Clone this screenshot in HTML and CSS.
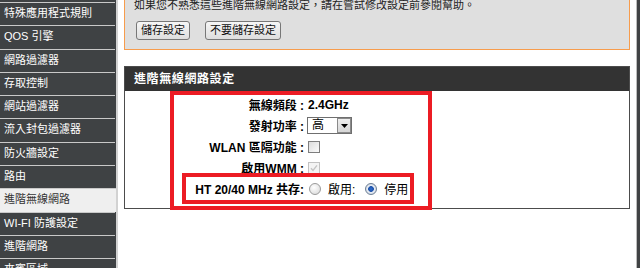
FILE: index.html
```html
<!DOCTYPE html>
<html lang="zh-Hant">
<head>
  <meta charset="UTF-8" />
  <title>進階無線網路</title>
  <link rel="stylesheet" href="styles.css">
</head>
<body>
  <div class="page">
    <nav class="sidebar">
      <a href="#">特殊應用程式規則</a>
      <a href="#">QOS 引擎</a>
      <a href="#">網路過濾器</a>
      <a href="#">存取控制</a>
      <a href="#">網站過濾器</a>
      <a href="#">流入封包過濾器</a>
      <a href="#">防火牆設定</a>
      <a href="#">路由</a>
      <a href="#" class="active">進階無線網路</a>
      <a href="#">WI-FI 防護設定</a>
      <a href="#">進階網路</a>
      <a href="#">來賓區域</a>
    </nav>

    <main class="main">
      <div class="notice-box">
        <p>如果您不熟悉這些進階無線網路設定，請在嘗試修改設定前參閱幫助。</p>
        <div class="actions">
          <button type="button">儲存設定</button>
          <button type="button">不要儲存設定</button>
        </div>
      </div>

      <section class="panel">
        <h2>進階無線網路設定</h2>
        <div class="panel-body">
          <div class="form-grid">
            <span class="label">無線頻段 :</span>
            <span class="value strong">2.4GHz</span>

            <span class="label">發射功率 :</span>
            <span class="value">
              <span class="select">
                <span class="select-text">高</span>
                <span class="select-btn">
                  <svg width="7" height="4" viewBox="0 0 7 4"><path d="M0 0H7L3.5 4Z" fill="#000"/></svg>
                </span>
              </span>
            </span>

            <span class="label">WLAN 區隔功能 :</span>
            <span class="value"><span class="check"></span></span>

            <span class="label">啟用WMM :</span>
            <span class="value">
              <span class="check disabled">
                <svg width="10" height="10" viewBox="0 0 10 10"><path d="M2 5.2L4 7.4L8 2.4" fill="none" stroke="#c4c4c4" stroke-width="1.4"/></svg>
              </span>
            </span>

            <span class="label">HT 20/40 MHz 共存:</span>
            <span class="value radios">
              <span class="radio"></span><span class="radio-text">啟用:</span>
              <span class="radio on"></span><span class="radio-text">停用</span>
            </span>
          </div>

          <div class="mark mark-outer"></div>
          <div class="mark mark-inner"></div>
        </div>
      </section>
    </main>

    <div class="edge"></div>
  </div>
</body>
</html>
```

FILE: styles.css
```css
* {
  margin: 0; padding: 0; box-sizing: border-box;
}
html, body {
  width: 640px;
  height: 268px;
  overflow: hidden;
  background: #fff;
}
body {
  font-family: "Liberation Sans", "Noto Sans CJK TC", sans-serif;
  font-size: 12px;
  color: #000;
}
.page {
  display: flex;
  height: 268px;
}

/* left menu */
.sidebar {
  width: 118px;
  flex-shrink: 0;
  background: #3f4244;
  border-right: 2px solid #d2d2d2;
  padding-top: 2px;
  display: flex;
  flex-direction: column;
}
.sidebar a {
  display: block;
  height: 23.3px;
  flex-shrink: 0;
  margin-right: 1px;
  border-top: 1px solid #c9c9c9;
  padding-left: 4px;
  color: #fff;
  text-decoration: none;
  font-size: 11px;
  line-height: 21px;
  white-space: nowrap;
}
.sidebar a.active {
  background: #efefef;
  color: #333;
  margin-right: 0;
}

/* main column */
.main {
  flex: 1;
  padding: 0 6px;
  margin-top: -12px;
}
.notice-box {
  background: #dfdfdf;
  border: 1px solid #f79c4c;
  padding: 8px 9px 9px;
}
.notice-box p {
  font-size: 11px;
  line-height: 16px;
  color: #222;
  white-space: nowrap;
}
.actions {
  display: flex;
  gap: 15px;
  margin-top: 8px;
  margin-left: 2px;
}
.actions button {
  height: 19px;
  padding: 0 4px;
  font-family: inherit;
  font-size: 11px;
  line-height: 17px;
  color: #111;
  background: linear-gradient(#f6f6f6, #dedede);
  border: 1px solid #777;
  border-radius: 3px;
}

.panel {
  margin-top: 16px;
  border: 1px solid #4c4c4c;
}
.panel h2 {
  height: 24px;
  background: #333;
  color: #fff;
  font-size: 12px;
  letter-spacing: 0.6px;
  line-height: 24px;
  padding-left: 9px;
}
.panel-body {
  position: relative;
  padding: 3px 0 9px;
  background: #fff;
}
.form-grid {
  display: grid;
  grid-template-columns: 179px 1fr;
  grid-auto-rows: 21px;
  column-gap: 4px;
  align-items: center;
}
.label {
  text-align: right;
  font-weight: bold;
  white-space: nowrap;
}
.value {
  display: flex;
  align-items: center;
}
.strong {
  font-weight: bold;
}

/* fake controls */
.select {
  display: flex;
  width: 45px;
  height: 17px;
  border: 1px solid #6f6f6f;
  background: #fff;
  margin-left: -1px;
}
.select-text {
  flex: 1;
  padding-left: 4px;
  line-height: 15px;
}
.select-btn {
  width: 14px;
  height: 15px;
  border: 1px solid #8a8a8a;
  background: linear-gradient(#efefef, #d6d6d6);
  display: flex;
  align-items: center;
  justify-content: center;
}
.check {
  width: 12px;
  height: 12px;
  border: 1px solid #7e7e7e;
  background: linear-gradient(135deg, #dcdcdc, #fbfbfb);
  display: flex;
  align-items: center;
  justify-content: center;
}
.check.disabled {
  border-color: #c2c2c2;
  background: #f4f4f4;
}
.radios {
  gap: 0;
}
.radio {
  width: 12px;
  height: 12px;
  border-radius: 50%;
  border: 1px solid #9a9a9a;
  background: radial-gradient(circle at 40% 35%, #fff, #d6d6d6);
  margin-left: 1px;
}
.radio.on {
  border-color: #6d7f95;
  background: radial-gradient(circle, #2f6fd0 0, #1b4fa8 2.5px, #e9eef6 3.2px, #c9d0da 6px);
  margin-left: 10px;
}
.radio-text {
  margin-left: 7px;
}

/* red annotation frames drawn over the form */
.mark {
  position: absolute;
  border: 4px solid #ec1c24;
  pointer-events: none;
}
.mark-outer {
  left: 45px;
  top: 0;
  width: 262px;
  height: 119px;
}
.mark-inner {
  left: 57px;
  top: 82px;
  width: 232px;
  height: 31px;
}

.edge {
  width: 4px;
  flex-shrink: 0;
  background: #404244;
  border-left: 1px solid #bdbdbd;
}
```
